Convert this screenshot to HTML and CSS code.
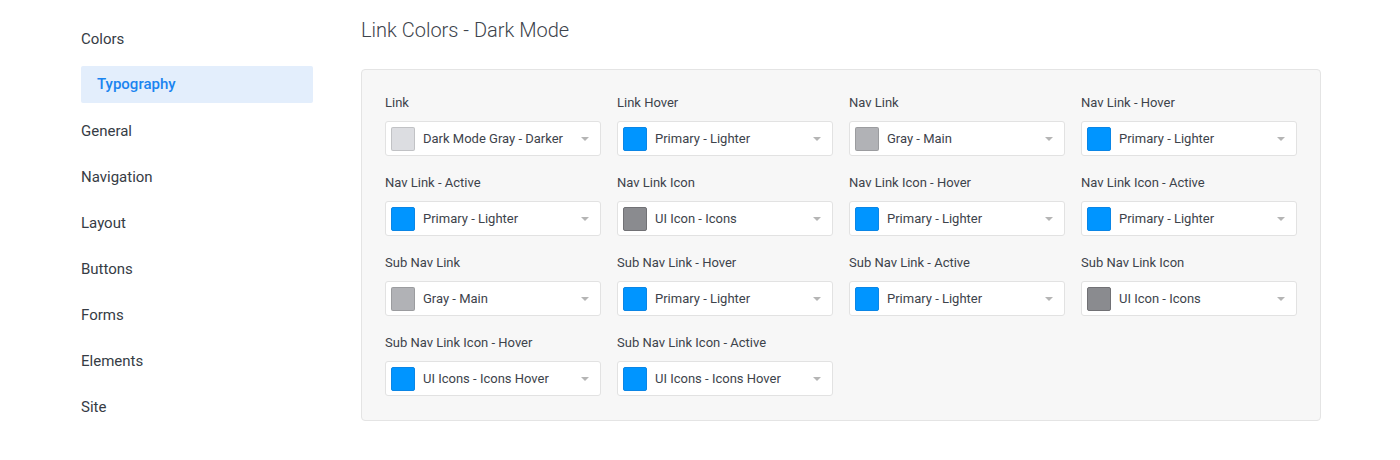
FILE: index.html
```html
<!DOCTYPE html>
<html>
<head>
<meta charset="utf-8">
<link rel="stylesheet" href="styles.css">
</head>
<body>
<div class="page">
  <nav class="sidebar">
    <div class="nav-item">Colors</div>
    <div class="nav-item active">Typography</div>
    <div class="nav-item">General</div>
    <div class="nav-item">Navigation</div>
    <div class="nav-item">Layout</div>
    <div class="nav-item">Buttons</div>
    <div class="nav-item">Forms</div>
    <div class="nav-item">Elements</div>
    <div class="nav-item">Site</div>
  </nav>
  <main class="main">
    <h1 class="title">Link Colors - Dark Mode</h1>
    <section class="panel">
      <div class="field"><div class="label">Link</div><div class="select"><span class="swatch sw-light"></span><span class="value">Dark Mode Gray - Darker</span><span class="arrow"></span></div></div>
      <div class="field"><div class="label">Link Hover</div><div class="select"><span class="swatch sw-blue"></span><span class="value">Primary - Lighter</span><span class="arrow"></span></div></div>
      <div class="field"><div class="label">Nav Link</div><div class="select"><span class="swatch sw-gray"></span><span class="value">Gray - Main</span><span class="arrow"></span></div></div>
      <div class="field"><div class="label">Nav Link - Hover</div><div class="select"><span class="swatch sw-blue"></span><span class="value">Primary - Lighter</span><span class="arrow"></span></div></div>

      <div class="field"><div class="label">Nav Link - Active</div><div class="select"><span class="swatch sw-blue"></span><span class="value">Primary - Lighter</span><span class="arrow"></span></div></div>
      <div class="field"><div class="label">Nav Link Icon</div><div class="select"><span class="swatch sw-dark"></span><span class="value">UI Icon - Icons</span><span class="arrow"></span></div></div>
      <div class="field"><div class="label">Nav Link Icon - Hover</div><div class="select"><span class="swatch sw-blue"></span><span class="value">Primary - Lighter</span><span class="arrow"></span></div></div>
      <div class="field"><div class="label">Nav Link Icon - Active</div><div class="select"><span class="swatch sw-blue"></span><span class="value">Primary - Lighter</span><span class="arrow"></span></div></div>

      <div class="field"><div class="label">Sub Nav Link</div><div class="select"><span class="swatch sw-gray"></span><span class="value">Gray - Main</span><span class="arrow"></span></div></div>
      <div class="field"><div class="label">Sub Nav Link - Hover</div><div class="select"><span class="swatch sw-blue"></span><span class="value">Primary - Lighter</span><span class="arrow"></span></div></div>
      <div class="field"><div class="label">Sub Nav Link - Active</div><div class="select"><span class="swatch sw-blue"></span><span class="value">Primary - Lighter</span><span class="arrow"></span></div></div>
      <div class="field"><div class="label">Sub Nav Link Icon</div><div class="select"><span class="swatch sw-dark"></span><span class="value">UI Icon - Icons</span><span class="arrow"></span></div></div>

      <div class="field"><div class="label">Sub Nav Link Icon - Hover</div><div class="select"><span class="swatch sw-blue"></span><span class="value">UI Icons - Icons Hover</span><span class="arrow"></span></div></div>
      <div class="field"><div class="label">Sub Nav Link Icon - Active</div><div class="select"><span class="swatch sw-blue"></span><span class="value">UI Icons - Icons Hover</span><span class="arrow"></span></div></div>
    </section>
  </main>
</div>
</body>
</html>
```

FILE: styles.css
```css
* { box-sizing: border-box; }
html, body { margin: 0; padding: 0; background: #ffffff; }
body {
  font-family: Roboto, "Liberation Sans", Arial, sans-serif;
  color: #3b4149;
  width: 1400px;
  height: 460px;
  overflow: hidden;
}
.page {
  display: flex;
  padding-left: 81px;
  gap: 48px;
}
.sidebar {
  width: 232px;
  padding-top: 21px;
  display: flex;
  flex-direction: column;
  gap: 9px;
}
.nav-item {
  height: 37px;
  line-height: 37px;
  font-size: 15px;
  font-weight: 400;
  color: #363c45;
}
.nav-item.active {
  margin-top: -1px;
  margin-bottom: 1px;
  background: #e3eefc;
  color: #1a84f0;
  font-weight: 500;
  padding-left: 16px;
  border-radius: 2px;
}
.main {
  width: 960px;
}
.title {
  margin: 0;
  height: 69px;
  padding-top: 18px;
  font-size: 20px;
  line-height: 24px;
  font-weight: 300;
  color: #3d434b;
}
.panel {
  background: #f7f7f7;
  border: 1px solid #e4e4e4;
  border-radius: 4px;
  padding: 25px 23px 23px 23px;
  display: grid;
  grid-template-columns: repeat(4, 216px);
  grid-auto-rows: 61px;
  column-gap: 16px;
  row-gap: 19px;
  height: 352px;
}
.label {
  font-size: 13px;
  line-height: 16px;
  color: #3d434b;
  margin-bottom: 10px;
}
.select {
  height: 35px;
  background: #ffffff;
  border: 1px solid #e2e2e2;
  border-radius: 3px;
  display: flex;
  align-items: center;
  padding: 0 10px 0 5px;
}
.swatch {
  width: 24px;
  height: 24px;
  border-radius: 2px;
  border: 1px solid rgba(0,0,0,0.12);
  flex: none;
}
.sw-light { background: #dcdde1; }
.sw-gray { background: #b1b2b6; }
.sw-dark { background: #8a8b8f; border-color: #717175; }
.sw-blue { background: #0095ff; border-color: #0a86e6; }
.value {
  margin-left: 8px;
  font-size: 13px;
  color: #3d434b;
  flex: 1;
  white-space: nowrap;
}
.arrow {
  width: 0;
  height: 0;
  border-left: 4px solid transparent;
  border-right: 4px solid transparent;
  border-top: 4px solid #b5b5b5;
  flex: none;
  margin-right: 1px;
}
```
